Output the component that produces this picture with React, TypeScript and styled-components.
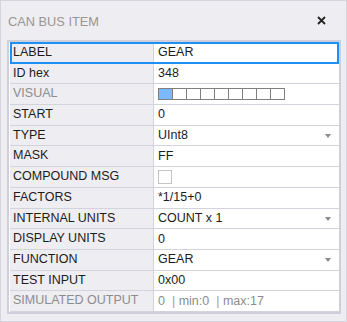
import * as React from 'react'
import styled, { createGlobalStyle } from 'styled-components'

const GlobalStyle = createGlobalStyle`
  html, body {
    margin: 0;
    padding: 0;
    background: #eeedf2;
  }
`

const Window = styled.div`
  box-sizing: border-box;
  width: 347px;
  height: 322px;
  border: 1px solid #d6d5dd;
  background: #eeedf2;
  font-family: "Liberation Sans", Arial, sans-serif;
  display: flex;
  flex-direction: column;
`

const TitleBar = styled.div`
  height: 39px;
  display: flex;
  align-items: center;
  justify-content: space-between;
  padding: 0 20px 0 7px;
`

const Title = styled.span`
  font-size: 12.8px;
  color: #9a9590;
  padding-top: 1px;
`

const CloseButton = styled.span`
  width: 9px;
  height: 9px;
  display: flex;
`

const Grid = styled.div`
  margin-left: 6px;
  width: 329px;
  border: 2px solid #cfcfdb;
  padding: 1px 0 0 1px;
  background: #ffffff;
`

const Row = styled.div`
  position: relative;
  display: grid;
  grid-template-columns: 144px 1fr;
  height: 20.7px;
  box-sizing: border-box;
  border-bottom: 1px solid #d3d3dd;
  font-size: 12.5px;
  line-height: 19px;
`

const SelectFrame = styled.div`
  position: absolute;
  inset: -1px 0 -1px 0;
  border: 2px solid #1e8ff5;
  pointer-events: none;
`

const Label = styled.div<{ $muted?: boolean }>`
  background: #eeedf2;
  border-right: 1px solid #d3d3dd;
  padding-left: 3px;
  color: ${(p) => (p.$muted ? '#8c8c8c' : '#1c1c1c')};
  white-space: nowrap;
`

const Value = styled.div<{ $muted?: boolean }>`
  display: flex;
  align-items: center;
  justify-content: space-between;
  padding: 0 8px 0 4px;
  color: ${(p) => (p.$muted ? '#8c8c8c' : '#1c1c1c')};
  white-space: pre;
`

const Arrow = styled.span`
  width: 0;
  height: 0;
  border-left: 3.5px solid transparent;
  border-right: 3.5px solid transparent;
  border-top: 4px solid #8a8a8a;
  margin-top: 1px;
`

const Bits = styled.div`
  display: flex;
  border: 1px solid #7f7f7f;
  height: 10px;
`

const Bit = styled.div<{ $on?: boolean }>`
  width: 13px;
  height: 10px;
  border-right: 1px solid #7f7f7f;
  background: ${(p) => (p.$on ? '#7ab8ff' : '#ffffff')};
  &:last-child {
    border-right: none;
  }
`

const Check = styled.div`
  width: 12px;
  height: 12px;
  border: 1px solid #c4c4c4;
  background: #fff;
`

const Pipe = styled.span`
  color: #b48fb0;
`

type Item = {
  label: string
  value?: React.ReactNode
  dropdown?: boolean
  muted?: boolean
  selected?: boolean
}

const bits = [true, false, false, false, false, false, false, false, false]

const items: Item[] = [
  { label: 'LABEL', value: 'GEAR', selected: true },
  { label: 'ID hex', value: '348' },
  {
    label: 'VISUAL',
    muted: true,
    value: (
      <Bits>
        {bits.map((b, i) => (
          <Bit key={i} $on={b} />
        ))}
      </Bits>
    ),
  },
  { label: 'START', value: '0' },
  { label: 'TYPE', value: 'UInt8', dropdown: true },
  { label: 'MASK', value: 'FF' },
  { label: 'COMPOUND MSG', value: <Check /> },
  { label: 'FACTORS', value: '*1/15+0' },
  { label: 'INTERNAL UNITS', value: 'COUNT x 1', dropdown: true },
  { label: 'DISPLAY UNITS', value: '0' },
  { label: 'FUNCTION', value: 'GEAR', dropdown: true },
  { label: 'TEST INPUT', value: '0x00' },
  {
    label: 'SIMULATED OUTPUT',
    muted: true,
    value: (
      <span>
        0  <Pipe>|</Pipe> min:0  <Pipe>|</Pipe> max:17
      </span>
    ),
  },
]

export default function App() {
  return (
    <>
      <GlobalStyle />
      <Window>
        <TitleBar>
          <Title>CAN BUS ITEM</Title>
          <CloseButton>
            <svg width="9" height="9" viewBox="0 0 9 9">
              <path d="M1 1L8 8M8 1L1 8" stroke="#222" strokeWidth="1.8" />
            </svg>
          </CloseButton>
        </TitleBar>
        <Grid>
          {items.map((it) => (
            <Row key={it.label}>
              <Label $muted={it.muted}>{it.label}</Label>
              <Value $muted={it.muted}>
                {it.value}
                {it.dropdown && <Arrow />}
              </Value>
              {it.selected && <SelectFrame />}
            </Row>
          ))}
        </Grid>
      </Window>
    </>
  )
}
